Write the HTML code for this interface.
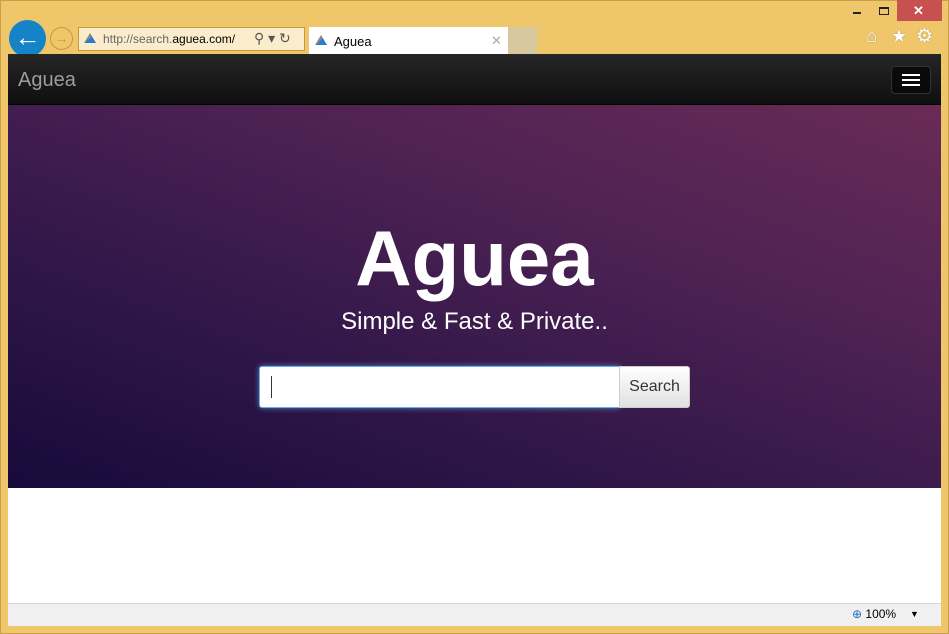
<!DOCTYPE html>
<html><head><style>
*{margin:0;padding:0;box-sizing:border-box}
body{width:949px;height:634px;background:#efc76a;position:relative;overflow:hidden;font-family:"Liberation Sans",sans-serif;box-shadow:inset 0 0 0 1px #c9a04a}
.abs{position:absolute}
#content{left:8px;top:54px;width:933px;height:549px;background:#fff}
#nav{left:8px;top:54px;width:933px;height:51px;background:linear-gradient(#262626,#0f0f0f);border-bottom:1px solid #000}
#hero{left:8px;top:105px;width:933px;height:383px;background:linear-gradient(200deg,#6a2b56 0%,#4d2253 35%,#2e1548 70%,#170a3a 100%)}
#status{left:8px;top:603px;width:933px;height:23px;background:#f0f0f0;border-top:1px solid #d6d6d6;font-size:12px}
</style></head><body>
<div class="abs" style="left:897px;top:0;width:45px;height:21px;background:#c75050"></div>
<div class="abs" style="left:913px;top:3px;color:#fff;font-size:13px;font-weight:bold">✕</div>
<div class="abs" style="left:853px;top:12px;width:8px;height:2px;background:#222"></div>
<div class="abs" style="left:879px;top:7px;width:10px;height:8px;border:1px solid #222;border-top-width:2px"></div>
<div class="abs" style="left:866px;top:26px;color:#fff;font-size:19px;text-shadow:0 0 1px #765">⌂</div>
<div class="abs" style="left:891px;top:26px;color:#fff;font-size:18px;text-shadow:0 0 1px #765">★</div>
<div class="abs" style="left:916px;top:25px;color:#fff;font-size:19px;text-shadow:0 0 1px #765">⚙</div>
<div class="abs" style="left:9px;top:20px;width:37px;height:37px;border-radius:50%;background:#1483c7;color:#fff;font-size:26px;font-weight:bold;text-align:center;line-height:35px">←</div>
<div class="abs" style="left:50px;top:27px;width:23px;height:23px;border-radius:50%;border:1px solid #c39a3e;color:#c39a3e;font-size:14px;text-align:center;line-height:21px">→</div>
<div class="abs" style="left:78px;top:27px;width:227px;height:24px;background:#fbeccc;border:1px solid #c39a3e"></div>
<div class="abs" style="left:84px;top:33px;width:12px;height:10px;background:linear-gradient(135deg,#888 50%,#2a7bd0 50%);clip-path:polygon(50% 0,100% 100%,0 100%)"></div>
<div class="abs" style="left:103px;top:32px;font-size:12px;color:#666">http://search.<span style="color:#000">aguea.com/</span></div>
<div class="abs" style="left:254px;top:30px;font-size:14px;color:#555">⚲ ▾ ↻</div>
<div class="abs" style="left:309px;top:27px;width:199px;height:27px;background:#fff"></div>
<div class="abs" style="left:508px;top:27px;width:29px;height:27px;background:#d8c8a0"></div>
<div class="abs" style="left:315px;top:35px;width:12px;height:10px;background:linear-gradient(135deg,#888 50%,#2a7bd0 50%);clip-path:polygon(50% 0,100% 100%,0 100%)"></div>
<div class="abs" style="left:334px;top:34px;font-size:13px;color:#000">Aguea</div>
<div class="abs" style="left:491px;top:33px;font-size:13px;color:#aaa">✕</div>
<div id="content" class="abs"></div>
<div id="nav" class="abs"></div>
<div class="abs" style="left:18px;top:69px;font-size:20px;color:#9d9d9d">Aguea</div>
<div class="abs" style="left:891px;top:66px;width:40px;height:28px;background:#0a0a0a;border:1px solid #333;border-radius:4px"></div>
<div class="abs" style="left:902px;top:74px;width:18px;height:2px;background:#fff;box-shadow:0 5px 0 #fff,0 10px 0 #fff"></div>
<div id="hero" class="abs"></div>
<div class="abs" style="left:8px;top:213px;width:933px;text-align:center;font-size:78px;font-weight:bold;color:#fff">Aguea</div>
<div class="abs" style="left:8px;top:308px;width:933px;text-align:center;font-size:24px;color:#fff">Simple &amp; Fast &amp; Private..</div>
<div class="abs" style="left:259px;top:366px;width:361px;height:42px;background:#fff;border:1px solid #66afe9;border-radius:3px 0 0 3px;box-shadow:0 0 6px rgba(102,175,233,.7)"></div>
<div class="abs" style="left:271px;top:376px;width:1px;height:22px;background:#333"></div>
<div class="abs" style="left:619px;top:366px;width:71px;height:42px;background:linear-gradient(#fff,#e0e0e0);border:1px solid #ccc;border-radius:0 3px 3px 0;font-size:16px;color:#333;text-align:center;line-height:40px">Search</div>
<div id="status" class="abs"></div>
<div class="abs" style="left:852px;top:607px;font-size:12px;color:#000"><span style="color:#1a6fc0">⊕</span> 100%</div>
<div class="abs" style="left:910px;top:609px;font-size:9px">▼</div>
</body></html>
